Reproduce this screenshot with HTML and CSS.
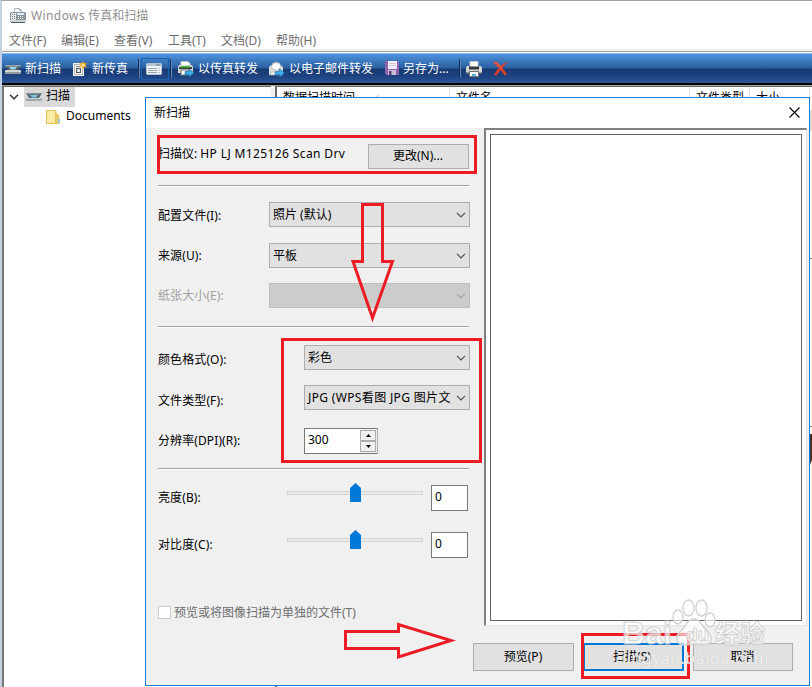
FILE: index.html
```html
<!DOCTYPE html>
<html lang="zh-CN">
<head>
    <meta charset="UTF-8">
    <title>Windows 传真和扫描</title>
    <link rel="stylesheet" href="styles.css">
</head>
<body>
    <div class="window">
        <div class="titlebar">
            <svg width="16" height="16" viewBox="0 0 16 16">
                <path d="M4.500 6V.5h5l2 2V6" fill="#fff" stroke="#aeb4b8"/>
                <path d="M9.500.5v2h2" fill="none" stroke="#aeb4b8"/>
                <rect x="0" y="4" width="16" height="9" rx="1" fill="#8b959b"/>
                <rect x="1" y="5" width="5" height="7" fill="#e6ecee"/>
                <path d="M2.500 6v5M4.500 6v5" stroke="#69747c" stroke-dasharray="1 1"/>
                <rect x="7" y="5" width="7" height="2" fill="#d5edf5"/>
                <path d="M8 8.500h6M8 10.500h6" stroke="#f0f2f3" stroke-dasharray="1 1"/>
                <rect x="0" y="12" width="16" height="2" fill="#cdd3d6"/>
                <path d="M1 14.500h14" stroke="#555c61"/>
            </svg>
            <span><b class="win">Windows</b> 传真和扫描</span>
        </div>
        <div class="menubar">
            <span class="m1">文件(F)</span>
            <span class="m2">编辑(E)</span>
            <span class="m3">查看(V)</span>
            <span class="m4">工具(T)</span>
            <span class="m5">文档(D)</span>
            <span class="m6">帮助(H)</span>
        </div>
        <div class="toolbar">
            <div class="tool t-scan">
                <svg width="16" height="16" viewBox="0 0 16 16">
                    <path d="M0 4h16l-3 5H3z" fill="#55646a"/>
                    <path d="M0 4h16l-1 1.500H1z" fill="#9aa9a9"/>
                    <path d="M4 6h8l-2 2.500H6z" fill="#9fd6ef"/>
                    <rect x="0" y="9" width="16" height="4" rx="1" fill="#d3d9d9"/>
                    <rect x="0" y="11" width="16" height="2" fill="#929c9e"/>
                </svg>
                <span>新扫描</span>
            </div>
            <div class="tool t-fax">
                <svg width="16" height="16" viewBox="0 0 16 16">
                    <rect x="1" y="2" width="11" height="13" fill="#f4f4f0"/>
                    <rect x="2.500" y="3.500" width="8" height="10" fill="#fff" stroke="#b5b5b0"/>
                    <rect x="4.500" y="7.500" width="4" height="4" fill="#dde4e8" stroke="#555"/>
                    <path d="M4 5.500h4" stroke="#777"/>
                    <path d="M11 0l1.200 2.300L15 2l-1.500 2.200L15 6.500l-2.800-.4L11 8.500 9.900 6l-2.700.5 1.600-2.300L7.200 2l2.700.3z" fill="#f4a926"/>
                    <circle cx="11.200" cy="4.200" r="1.400" fill="#ffe79a"/>
                </svg>
                <span>新传真</span>
            </div>
            <i class="sep s1"></i>
            <div class="tool t-view">
                <svg width="16" height="14" viewBox="0 0 16 14">
                    <rect x=".5" y="1.500" width="15" height="11" rx="1" fill="#f2f6f9" stroke="#b4c4d2"/>
                    <rect x="1" y="2" width="14" height="2" fill="#b5c4cf"/>
                    <path d="M10 3h4" stroke="#5c7488"/>
                    <path d="M2 6.500h9M2 8.500h9M2 10.500h9" stroke="#8fa3b1"/>
                    <path d="M12 6.500h2M12 8.500h2M12 10.500h2" stroke="#b8c5cf"/>
                </svg>
            </div>
            <i class="sep s2"></i>
            <div class="tool t-fwd">
                <svg width="16" height="16" viewBox="0 0 16 16">
                    <path d="M3 5V.5h7l2 2V5" fill="#fff" stroke="#c5c9cb"/>
                    <path d="M1 4h13l1 2v6H0V6z" fill="#cfd3d1"/>
                    <rect x="1" y="6" width="13" height="2" fill="#3a4444"/>
                    <rect x="3" y="5" width="9" height="1.500" fill="#4bbf30"/>
                    <rect x="3" y="9" width="8" height="5" fill="#fff" stroke="#777"/>
                    <path d="M7 10.500h4V8l5 4-5 4v-2.500H7z" fill="#39aeea" stroke="#1767a5" stroke-width=".6"/>
                </svg>
                <span>以传真转发</span>
            </div>
            <div class="tool t-mail">
                <svg width="16" height="16" viewBox="0 0 16 16">
                    <path d="M0 6l7-5.500L14 6v8H0z" fill="#d9dcdc"/>
                    <path d="M2.500 6.500L4 2h6.500L12 6.500 7 10z" fill="#fff" stroke="#aeb5b8" stroke-width=".7"/>
                    <path d="M0 14l6-5 2 0 6 5z" fill="#f4f4f4" stroke="#a3a8aa" stroke-width=".6"/>
                    <path d="M6 10.500h4.500V8l5 4-5 4v-2.500H6z" fill="#39aeea" stroke="#1767a5" stroke-width=".6"/>
                </svg>
                <span>以电子邮件转发</span>
            </div>
            <div class="tool t-save">
                <svg width="14" height="15" viewBox="0 0 14 15">
                    <path d="M0 0h14v14H1.500L0 12.500z" fill="#8f62b0"/>
                    <rect x="3" y="0" width="9" height="8" fill="#f4f0f7"/>
                    <path d="M4 2.500h7M4 4.500h7" stroke="#d2c5dc"/>
                    <rect x="3" y="9" width="8" height="5" fill="#c9bcd3"/>
                    <rect x="4" y="10" width="2.500" height="4" fill="#5b3b78"/>
                </svg>
                <span>另存为...</span>
            </div>
            <i class="sep s3"></i>
            <div class="tool t-print">
                <svg width="16" height="16" viewBox="0 0 16 16">
                    <rect x="4" y=".5" width="8" height="6" fill="#fff" stroke="#c9c9c9"/>
                    <path d="M1 5h2v2h10V5h2l1 2v5H0V7z" fill="#d6d6d3"/>
                    <rect x="3" y="5.500" width="10" height="3" fill="#33393b"/>
                    <path d="M0 11h16v1.500H0z" fill="#8d9191"/>
                    <rect x="3.500" y="10.500" width="9" height="5" fill="#fff" stroke="#6f7579"/>
                    <path d="M6 13h4v2H6z" fill="#58b5dd"/>
                </svg>
            </div>
            <div class="tool t-del">
                <svg width="16" height="15" viewBox="0 0 16 15">
                    <path d="M0 1.500L3.500.5 8 5C10 3 12 1.500 15.500.5 13 2.500 11 5 9.500 7l4.500 6-2.500 1.500L7.500 9C6 11 5 13 3.500 14.500L1 14C2 11.500 4 9 6 7z" fill="#d9402c"/>
                    <path d="M1.500 2l2-.4 5 6" fill="none" stroke="#f08a78" stroke-width=".8"/>
                </svg>
            </div>
        </div>
        <div class="main">
            <div class="tree">
                <div class="tree-row">
                    <svg class="chevron" width="10" height="6" viewBox="0 0 10 6"><path d="M1 .8l4 4 4-4" fill="none" stroke="#404040" stroke-width="1.600"/></svg>
                    <div class="tree-sel">
                        <svg width="16" height="10" viewBox="0 0 16 10">
                            <path d="M0 1h16l-3 5H3z" fill="#55646a"/>
                            <path d="M0 1h16l-1 1.500H1z" fill="#84908f"/>
                            <path d="M4 3h8l-2 2.500H6z" fill="#7ec4e2"/>
                            <rect x="0" y="6" width="16" height="3" rx="1" fill="#9da6a8"/>
                            <path d="M1 6.500h14" stroke="#cfd5d5"/>
                        </svg>
                        <span>扫描</span>
                    </div>
                </div>
                <div class="tree-row tree-child">
                    <svg width="15" height="16" viewBox="0 0 15 16">
                        <path d="M0 1h10l1 2v12H0z" fill="#f6dd83"/>
                        <path d="M.5 1.500h9v13h-9z" fill="#fbeaa4" stroke="#e2c25b"/>
                        <path d="M10 5h2.500l1 2v8H10z" fill="#e9cb66"/>
                        <rect x="12" y="10" width="2" height="4" fill="#9ec9dd"/>
                    </svg>
                    <span>Documents</span>
                </div>
            </div>
            <div class="list">
                <div class="col c1">数据扫描时间 <small>∕</small></div>
                <div class="col c2">文件名</div>
                <div class="col c3">文件类型</div>
                <div class="col c4">大小</div>
            </div>
        </div>
        <!-- pedaço da janela de trás, à direita -->
        <svg class="behind" width="2" height="590" viewBox="0 0 2 590">
            <rect x="0" y="13" width="2" height="21" fill="#d9d9d9"/>
            <rect x="0" y="161" width="2" height="1" fill="#777"/>
            <rect x="0" y="329" width="2" height="1" fill="#777"/>
            <path d="M0 337h2v26l-2 5z" fill="#39343a"/>
        </svg>
    </div>

    <div class="dialog">
        <div class="dialog-title">
            <span>新扫描</span>
            <svg width="11" height="11" viewBox="0 0 11 11"><path d="M.5.5l10 10M10.500.5l-10 10" stroke="#000" stroke-width="1.100"/></svg>
        </div>
        <div class="dialog-body">
            <form class="form">
                <div class="row scanner">
                    <span class="scanner-name">扫描仪: <b class="model">HP LJ M125126 Scan Drv</b></span>
                    <button type="button" class="btn btn-change">更改(N)...</button>
                </div>
                <div class="line"></div>
                <div class="row profile">
                    <label>配置文件(I):</label>
                    <div class="combo wide"><span>照片 (默认)</span><svg width="10" height="6"><path d="M1 .8l4 4 4-4"/></svg></div>
                </div>
                <div class="row source">
                    <label>来源(U):</label>
                    <div class="combo wide"><span>平板</span><svg width="10" height="6"><path d="M1 .8l4 4 4-4"/></svg></div>
                </div>
                <div class="row paper">
                    <label class="off">纸张大小(E):</label>
                    <div class="combo wide disabled"><span></span><svg width="10" height="6"><path d="M1 .8l4 4 4-4"/></svg></div>
                </div>
                <div class="line line2"></div>
                <div class="row color">
                    <label>颜色格式(O):</label>
                    <div class="combo"><span>彩色</span><svg width="10" height="6"><path d="M1 .8l4 4 4-4"/></svg></div>
                </div>
                <div class="row filetype">
                    <label>文件类型(F):</label>
                    <div class="combo"><span class="jpg">JPG (WPS看图 JPG 图片文</span><svg width="10" height="6"><path d="M1 .8l4 4 4-4"/></svg></div>
                </div>
                <div class="row dpi">
                    <label>分辨率(DPI)(R):</label>
                    <div class="spin">
                        <span>300</span>
                        <div class="arrows">
                            <i><svg width="5" height="3"><path d="M0 3h5L2.500 0z"/></svg></i>
                            <i><svg width="5" height="3"><path d="M0 0h5L2.500 3z"/></svg></i>
                        </div>
                    </div>
                </div>
                <div class="line line3"></div>
                <div class="row bright">
                    <label>亮度(B):</label>
                    <svg class="slider" width="136" height="20" viewBox="0 0 136 20">
                        <rect x=".5" y="8.500" width="135" height="3" fill="#e7eaea" stroke="#d6d6d6"/>
                        <path d="M63 19V5l5.500-5L74 5v14z" fill="#0078d7"/>
                    </svg>
                    <div class="num">0</div>
                </div>
                <div class="row contrast">
                    <label>对比度(C):</label>
                    <svg class="slider" width="136" height="20" viewBox="0 0 136 20">
                        <rect x=".5" y="8.500" width="135" height="3" fill="#e7eaea" stroke="#d6d6d6"/>
                        <path d="M63 19V5l5.500-5L74 5v14z" fill="#0078d7"/>
                    </svg>
                    <div class="num">0</div>
                </div>
                <div class="row check">
                    <i class="box"></i>
                    <span>预览或将图像扫描为单独的文件(T)</span>
                </div>
            </form>
            <div class="preview"><div class="page"></div></div>
        </div>
        <div class="dialog-footer">
            <button class="btn">预览(P)</button>
            <button class="btn primary">扫描(S)</button>
            <button class="btn cancel">取消</button>
        </div>
    </div>

    <!-- marcações em vermelho -->
    <svg class="marks" width="812" height="687" viewBox="0 0 812 687">
        <rect x="158.500" y="136.500" width="317" height="36"/>
        <rect x="282.500" y="339.500" width="198" height="122"/>
        <rect x="582.500" y="634.500" width="106" height="43"/>
        <path d="M362.500 204.500h20v57h10L372.500 318 353 261.500h9.500z"/>
        <path d="M345.500 631.500h53v-7L451 640.500l-52.500 16.500v-8.500h-53z"/>
    </svg>

    <div class="watermark">
        <svg class="paw" width="46" height="54" viewBox="0 0 46 54">
            <ellipse cx="6" cy="18" rx="5" ry="7"/>
            <ellipse cx="16.500" cy="9" rx="5.500" ry="8"/>
            <ellipse cx="29.500" cy="9" rx="5.500" ry="8"/>
            <ellipse cx="38" cy="21" rx="5" ry="7"/>
            <path d="M22 20c7 0 8 8 14 13 6 6 3 14-5 13-6-1-12-1-18 0-8 1-11-8-5-13 6-5 7-13 14-13z"/>
        </svg>
        <div class="wm-top"><b class="wm-bai">Bai</b><b class="wm-du">du</b><b class="wm-cn">经验</b></div>
        <div class="wm-url">jingyan.baidu.com</div>
    </div>
</body>
</html>
```
FILE: styles.css
```css
* {
    box-sizing: border-box;
}
body {
    margin: 0;
    width: 812px;
    height: 687px;
    overflow: hidden;
    position: relative;
    background: #fff;
    font-family: "Noto Sans", "Noto Sans CJK SC", sans-serif;
    font-size: 12px;
    line-height: 18px;
    color: #000;
}
svg {
    display: block;
    flex: none;
}
i, b {
    font-style: normal;
    font-weight: normal;
}
span, label {
    white-space: nowrap;
}

/* Janela principal */
.window {
    height: 687px;
    border-left: 2px solid #c3d0e4;
    border-top: 1px solid #a3a3a3;
    display: flex;
    flex-direction: column;
    position: relative;
}
.titlebar {
    height: 29px;
    padding-left: 8px;
    display: flex;
    align-items: center;
    gap: 5px;
    color: #8f8f8f;
}
.win {
    letter-spacing: .4px;
}
.menubar {
    height: 22px;
    display: flex;
    align-items: center;
    padding-left: 7px;
    color: #6d6d6d;
    border-bottom: 1px solid #a0a0a0;
    box-shadow: inset 0 -2px #f0f0f0;
}
.menubar span {
    line-height: 20px;
    padding-top: 1px;
}
.m1 { width: 52px; }
.m2 { width: 53px; }
.m3 { width: 54px; }
.m4 { width: 53px; }
.m5 { width: 55px; }
.toolbar {
    height: 32px;
    margin-top: 1px;
    display: flex;
    align-items: center;
    color: #fff;
    background: linear-gradient(#4e93de 0, #2a5f9f 14px, #173a72 15px, #1d4280 22px, #2a5699 29px);
    border-bottom: 2px solid #000;
    border-top: 1px solid #8ab7ea;
}
.tool {
    display: flex;
    align-items: center;
    gap: 4px;
    height: 28px;
}
.t-scan { margin-left: 3px; width: 67px; }
.t-fax { width: 66px; }
.sep {
    width: 2px;
    height: 19px;
    border-left: 1px solid #12305f;
    border-right: 1px solid #5f87bd;
}
.t-view {
    width: 28px;
    height: 22px;
    margin: 0 1px;
    padding-left: 4px;
    border: 1px solid #1c60b0;
}
.t-fwd { margin-left: 6px; width: 91px; }
.t-mail { width: 116px; }
.t-save { width: 74px; }
.t-print { margin-left: 5px; width: 27px; }
.main {
    flex: 1;
    display: flex;
    background: #f0f0f0;
    border-top: 1px solid #a0a0a0;
}
.tree {
    width: 269px;
    background: #fff;
    border-top: 1px solid #696969;
    border-left: 2px solid #777;
}
.tree-row {
    display: flex;
    align-items: center;
    height: 20px;
}
.tree-row span {
    margin-top: -2px;
}
.chevron {
    margin-left: 5px;
}
.tree-sel {
    display: flex;
    align-items: center;
    gap: 4px;
    width: 51px;
    height: 20px;
    margin-left: 5px;
    padding-left: 2px;
    background: #d9d9d9;
}
.tree-child {
    padding-left: 42px;
    gap: 5px;
}
.list {
    flex: 1;
    margin-left: 4px;
    display: flex;
    background: #fff;
    border-top: 1px solid #696969;
    border-left: 2px solid #696969;
}
.col {
    height: 24px;
    line-height: 22px;
    padding-left: 6px;
    border-right: 1px solid #e0e0e0;
    white-space: nowrap;
}
.col small {
    font-size: 9px;
    margin-left: 12px;
    color: #777;
}
.c1 { width: 173px; }
.c2 { width: 240px; }
.c3 { width: 60px; }
.c4 { width: 60px; }
.behind {
    position: absolute;
    right: 0;
    top: 96px;
}

/* Janela de digitalização */
.dialog {
    position: absolute;
    left: 145px;
    top: 97px;
    width: 665px;
    height: 589px;
    background: #f0f0f0;
    border: 1px solid #1a7fd4;
}
.dialog-title {
    height: 30px;
    background: #fff;
    display: flex;
    align-items: center;
    justify-content: space-between;
    padding: 0 9px 1px 8px;
}
.dialog-body {
    display: flex;
    height: 498px;
}
.form {
    width: 338px;
    padding: 16px 14px 0 12px;
}
.row {
    display: flex;
    align-items: center;
    height: 25px;
}
.row label {
    margin-right: auto;
    letter-spacing: .1px;
}
.scanner {
    justify-content: space-between;
}
.scanner-name {
    padding-bottom: 5px;
}
.model {
    letter-spacing: .38px;
}
.btn {
    width: 101px;
    height: 28px;
    padding: 0 1px 0 0;
    border: 1px solid #adadad;
    background: #e1e1e1;
    font: inherit;
    color: #000;
}
.btn-change {
    height: 25px;
    margin-right: 1px;
    padding-bottom: 1px;
}
.line {
    height: 2px;
    margin: 16px 1px 0 0;
    border-top: 1px solid #a0a0a0;
    border-bottom: 1px solid #fff;
}
.line2 { margin-top: 18px; }
.line3 { margin-top: 14px; }
.profile { margin-top: 15px; }
.source { margin-top: 16px; }
.paper { margin-top: 15px; }
.color { margin-top: 17px; }
.filetype { margin-top: 15px; }
.profile label {
    padding-top: 2px;
}
.color label {
    padding-top: 4px;
}
.filetype label {
    padding-top: 6px;
}
.off {
    color: #a0a0a0;
}
.combo {
    width: 166px;
    height: 25px;
    padding: 0 3px;
    border: 1px solid #adadad;
    background: #e1e1e1;
    display: flex;
    align-items: center;
    justify-content: space-between;
}
.combo path {
    fill: none;
    stroke: #505050;
    stroke-width: 1.2;
}
.combo.wide {
    width: 201px;
}
.combo.disabled {
    background: #ccc;
    border-color: #bfbfbf;
}
.combo.disabled path {
    stroke: #a5a5a5;
}
.jpg {
    letter-spacing: .35px;
}
.dpi {
    margin-top: 18px;
    height: 26px;
}
.spin {
    width: 74px;
    height: 26px;
    margin-right: 92px;
    padding-left: 3px;
    display: flex;
    align-items: center;
    justify-content: space-between;
    background: #fff;
    border: 1px solid #7a7a7a;
    border-right-color: #adadad;
}
.spin span {
    padding-bottom: 2px;
}
.arrows {
    width: 17px;
    height: 24px;
    padding: 1px 1px 1px 0;
    display: flex;
    flex-direction: column;
    background: #f0f0f0;
}
.arrows i {
    flex: 1;
    display: flex;
    align-items: center;
    justify-content: center;
    border: 1px solid #adadad;
}
.bright {
    height: 26px;
    margin-top: 15px;
}
.contrast {
    height: 26px;
    margin-top: 21px;
}
.slider {
    margin-right: 8px;
    margin-bottom: 10px;
}
.num {
    width: 37px;
    height: 26px;
    margin-right: 2px;
    padding: 2px 0 0 3px;
    background: #fff;
    border: 1px solid #7a7a7a;
}
.check {
    height: 13px;
    margin-top: 48px;
    gap: 3px;
    color: #6d6d6d;
}
.box {
    width: 13px;
    height: 13px;
    background: #fff;
    border: 1px solid #ccc;
}
.preview {
    width: 323px;
    padding: 4px;
    background: #fff;
    border: 2px solid #696969;
    border-top-color: #808080;
    border-left-color: #808080;
    border-right: 1px solid #e3e3e3;
    border-bottom: 1px solid #e3e3e3;
}
.page {
    height: 100%;
    border: 1px solid #646464;
}
.dialog-footer {
    display: flex;
    gap: 9px;
    padding: 17px 0 0 327px;
}
.btn.primary {
    border: 2px solid #0078d7;
    padding-right: 3px;
}
.btn.cancel {
    width: 100px;
}

/* Setas e caixas vermelhas */
.marks {
    position: absolute;
    left: 0;
    top: 0;
    fill: none;
    stroke: #ed1c24;
    stroke-width: 3;
}

/* Marca d'água */
.watermark {
    position: absolute;
    left: 622px;
    top: 599px;
    width: 150px;
    height: 72px;
    color: rgba(255, 255, 255, .7);
}
.paw {
    position: absolute;
    left: 50px;
    top: 0;
    fill: rgba(255, 255, 255, .6);
    stroke: #d0d0d0;
    stroke-width: 1.3;
}
.wm-top {
    display: flex;
    align-items: center;
    height: 30px;
    margin-top: 19px;
    -webkit-text-stroke: 1px rgba(200, 200, 200, .8);
}
.wm-top b {
    font-weight: bold;
    position: relative;
}
.wm-bai {
    width: 58px;
    font-family: "Liberation Sans", sans-serif;
    font-size: 32px;
}
.wm-du {
    width: 35px;
    padding-left: 6px;
    padding-top: 3px;
    font-size: 19px;
    font-family: "Liberation Sans", sans-serif;
}
.wm-cn {
    font-size: 25px;
}
.wm-url {
    font-size: 16px;
    line-height: 18px;
    margin-top: 1px;
    letter-spacing: .5px;
    color: rgba(255, 255, 255, .75);
    text-shadow: 0 0 1px #bbb;
}
```
